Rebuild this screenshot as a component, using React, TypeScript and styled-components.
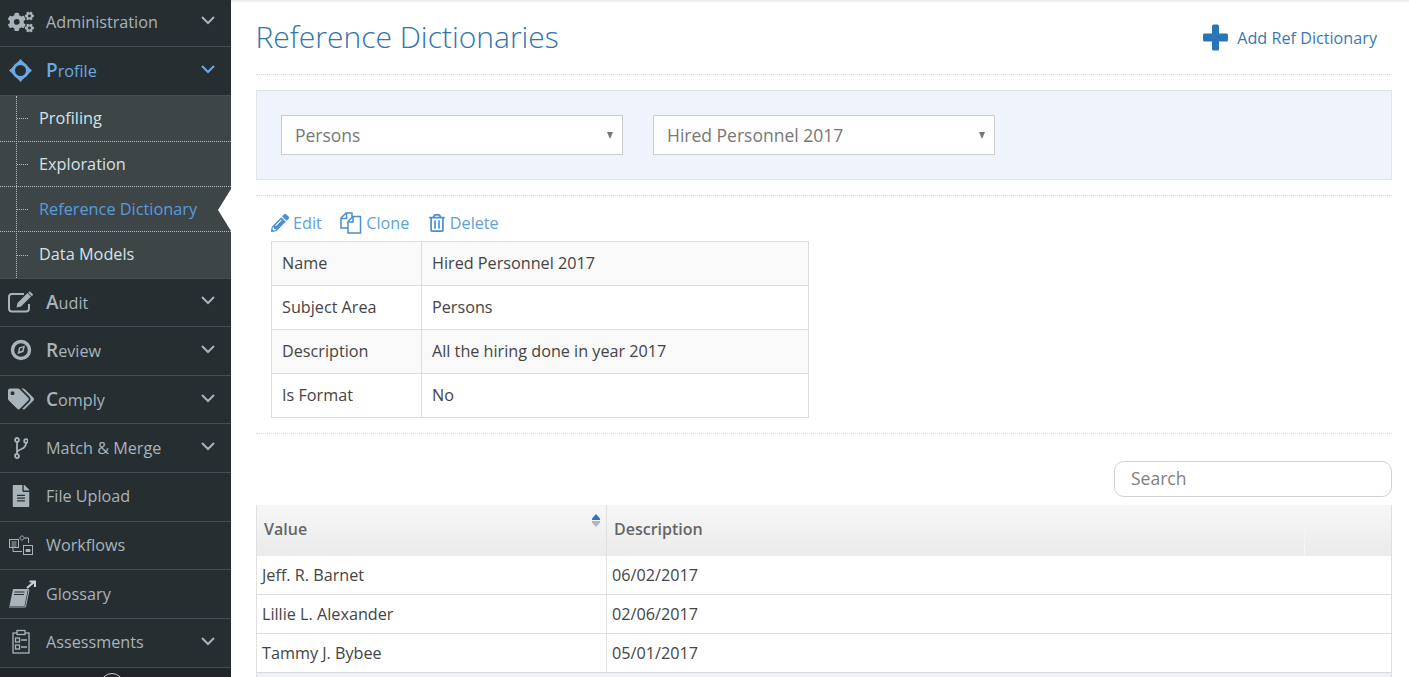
import React from 'react';
import styled, { createGlobalStyle } from 'styled-components';
import { FaCogs, FaPencilAlt, FaTags, FaFileAlt, FaRegTrashAlt } from 'react-icons/fa';

const GlobalStyle = createGlobalStyle`
  html, body {
    margin: 0;
    padding: 0;
    height: 100%;
    overflow: hidden;
    background: #fff;
    font-family: 'Open Sans', sans-serif;
  }
  * { box-sizing: border-box; }
`;

const Page = styled.div`
  display: grid;
  grid-template-columns: 231px 1fr;
  height: 677px;
  overflow: hidden;
`;

const Sidebar = styled.nav`
  background: #1f2528;
  height: 677px;
  overflow: hidden;
  position: relative;
`;

const MenuList = styled.div`
  margin-top: -1.75px;
`;

const MenuRow = styled.div<{ $active?: boolean }>`
  display: flex;
  align-items: center;
  height: 48.65px;
  padding: 0 15px 1px 0;
  background: #272e32;
  border-bottom: 1px solid #454e52;
  color: ${(p) => (p.$active ? '#6aa9e4' : '#a8b3ba')};
  font-size: 16.2px;
`;

const MenuIcon = styled.span`
  display: flex;
  align-items: center;
  justify-content: center;
  width: 41px;
  margin-right: 5px;
  flex-shrink: 0;
  font-size: 26px;
  color: inherit;
`;

const MenuLabel = styled.span<{ $cap?: boolean }>`
  display: inline-block;
  flex: 1;
  ${(p) =>
    p.$cap
      ? `&::first-letter { font-size: 19px; font-weight: 600; }`
      : ''}
`;

const Chevron = styled.svg`
  width: 16px;
  height: 10px;
  flex-shrink: 0;
  fill: none;
  stroke: currentColor;
  stroke-width: 2;
  margin-top: -3px;
`;

const SubList = styled.div`
  background: #3d4547;
  position: relative;
  height: 183px;
  display: grid;
  grid-template-rows: 46px 45px 45px 46px;
  border-bottom: 1px solid #454e52;
  &::before {
    content: '';
    position: absolute;
    left: 16px;
    top: 0;
    bottom: 0;
    border-left: 1px dotted #b9c0c3;
  }
`;

const SubRow = styled.div<{ $active?: boolean; $last?: boolean }>`
  position: relative;
  display: flex;
  align-items: center;
  padding: 0 0 ${(p) => (p.$last ? '2px' : '0')} 39px;
  font-size: 16.3px;
  font-weight: 500;
  color: ${(p) => (p.$active ? '#5b9bdc' : '#d7e1e8')};
  border-bottom: ${(p) => (p.$last ? 'none' : '1px dotted #b9c0c3')};
  &::before {
    content: '';
    position: absolute;
    left: 17px;
    top: 50%;
    width: 11px;
    border-top: 1px dotted #b9c0c3;
  }
  ${(p) =>
    p.$active
      ? `&::after {
          content: '';
          position: absolute;
          right: 0;
          top: 2px;
          border-style: solid;
          border-width: 21px 13px 21px 0;
          border-color: transparent #fff transparent transparent;
        }`
      : ''}
`;

const ScrollKnob = styled.div`
  position: absolute;
  left: 100px;
  top: 673px;
  width: 24px;
  height: 24px;
  border: 1px solid #c8cfd2;
  border-radius: 50%;
`;

const Main = styled.main`
  min-width: 0;
  height: 677px;
  overflow: hidden;
  border-top: 2px solid #eeeeee;
  padding: 0 17px 0 25px;
`;

const Header = styled.header`
  display: flex;
  align-items: center;
  justify-content: space-between;
  height: 73px;
  border-bottom: 1px dotted #d8d8d8;
  padding: 0 15px 3px 0;
`;

const Title = styled.h1`
  margin: 0 0 0 -0.5px;
  font-size: 30px;
  font-weight: 300;
  color: #2f74ab;
`;

const AddLink = styled.a`
  display: flex;
  align-items: center;
  gap: 8px;
  padding-top: 2px;
  font-size: 16.2px;
  color: #3b78b0;
  svg {
    width: 27px;
    height: 27px;
    fill: #2b75b7;
  }
`;

const FilterPanel = styled.section`
  display: flex;
  gap: 30px;
  margin-top: 15px;
  height: 90px;
  padding: 24px;
  background: #eff4fc;
  border: 1px solid #e2e4e6;
`;

const SelectBox = styled.div`
  position: relative;
  display: flex;
  align-items: center;
  width: 342px;
  height: 40px;
  padding: 0 0 1px 13px;
  background: #fff;
  border: 1px solid #cccccc;
  font-size: 17.5px;
  color: #777;
  &::after {
    content: '';
    position: absolute;
    right: 9px;
    top: 16px;
    border-style: solid;
    border-width: 7px 3.5px 0;
    border-color: #777 transparent transparent;
  }
`;

const Divider = styled.div`
  margin-top: 15px;
  border-top: 1px dotted #d8d8d8;
`;

const DetailBlock = styled.section`
  margin-top: 15px;
  padding: 0 0 15px 15px;
  border-bottom: 1px dotted #d8d8d8;
`;

const Actions = styled.div`
  display: flex;
  align-items: center;
  gap: 18.5px;
  height: 30px;
  padding-bottom: 6px;
`;

const ActionLink = styled.a`
  display: flex;
  align-items: center;
  gap: 4px;
  font-size: 16.2px;
  color: #5f9fdc;
  svg {
    color: #4a8fd1;
  }
`;

const InfoTable = styled.table`
  width: 538px;
  border-collapse: collapse;
  font-size: 16.2px;
  color: #444;
`;

const InfoRow = styled.tr<{ $odd: boolean }>`
  height: 44px;
  background: ${(p) => (p.$odd ? '#f9f9f9' : '#fff')};
`;

const InfoCell = styled.td<{ $label?: boolean }>`
  border: 1px solid #dddddd;
  padding: 0 10px 2px;
  width: ${(p) => (p.$label ? '150px' : 'auto')};
`;

const SearchRow = styled.div`
  display: flex;
  justify-content: flex-end;
  margin-top: 27px;
`;

const SearchInput = styled.input`
  width: 278px;
  height: 36px;
  padding: 0 16px 3px;
  border: 1px solid #d2d2d2;
  border-radius: 10px;
  font-family: 'Open Sans', sans-serif;
  font-size: 17.5px;
  outline: none;
  &::placeholder {
    color: #7f7f7f;
    opacity: 1;
  }
`;

const ValuesGrid = styled.div`
  margin-top: 8px;
  border-left: 1px solid #e0e0e0;
  border-right: 1px solid #e0e0e0;
`;

const GridHead = styled.div`
  display: grid;
  grid-template-columns: 350px 1fr 86px;
  height: 51px;
  background: linear-gradient(#f7f7f7, #ebebeb);
  color: #666;
  font-size: 16px;
  font-weight: 600;
`;

const HeadCell = styled.div<{ $faint?: boolean }>`
  position: relative;
  display: flex;
  align-items: center;
  padding: 0 0 3px 7px;
  border-right: 1px solid ${(p) => (p.$faint ? '#f4f4f4' : '#e0e0e0')};
  &:last-child {
    border-right: none;
  }
`;

const SortIcon = styled.svg`
  position: absolute;
  right: 5px;
  top: 9px;
  width: 10px;
  height: 13px;
`;

const GridRow = styled.div`
  display: grid;
  grid-template-columns: 350px 1fr;
  height: 39px;
  background: #fff;
  border-bottom: 1px solid #e0e0e0;
  color: #444;
  font-size: 16.2px;
`;

const GridCell = styled.div<{ $first?: boolean }>`
  display: flex;
  align-items: center;
  padding-left: 5px;
  border-right: ${(p) => (p.$first ? '1px solid #e2e2e2' : 'none')};
`;

const GridFooter = styled.div`
  height: 12px;
  background: #eef1f6;
  border-top: 1px solid #d9d9d9;
  margin-top: -1px;
`;

const ProfileIcon = () => (
  <svg width="25" height="25" viewBox="0 0 25 25" fill="currentColor">
    <circle cx="12.500" cy="12.500" r="7" fill="none" stroke="currentColor" strokeWidth="3" />
    <path d="M12.500 1l4.500 5h-9zM12.500 24l-4.500-5h9zM1 12.500l5-4.500v9zM24 12.500l-5 4.500V8z" />
  </svg>
);

const EditIcon = () => (
  <svg width="25" height="22" viewBox="0 0 25 22">
    <path d="M21 13v4.500a3 3 0 0 1-3 3H4a3 3 0 0 1-3-3V6a3 3 0 0 1 3-3h12" fill="none" stroke="currentColor" strokeWidth="2" />
    <path d="M19.500 2l3.500 3.500L13 15.500l-4.500 1 1-4.500z" fill="currentColor" />
    <path d="M21 1l3.500 3.500" stroke="currentColor" strokeWidth="2" />
  </svg>
);

const CompassIcon = () => (
  <svg width="22" height="22" viewBox="0 0 22 22" fill="none" stroke="currentColor">
    <circle cx="11" cy="11" r="8.500" strokeWidth="3.400" />
    <path d="M7.500 15l1.500-6.500 6-2-1.500 6.500z" fill="currentColor" stroke="none" />
    <path d="M9.500 12.500l.7-3 2.800-1-.7 3z" fill="#272e32" stroke="none" />
  </svg>
);

const BranchIcon = () => (
  <svg width="14" height="22" viewBox="0 0 14 22" fill="none" stroke="currentColor" strokeWidth="1.800">
    <circle cx="3" cy="3" r="2" />
    <circle cx="12" cy="4" r="1.800" />
    <circle cx="3" cy="19" r="2" />
    <path d="M3 5v12M12 6c0 4-2 5-4.500 6S3 14 3 16" />
  </svg>
);

const WorkflowIcon = () => (
  <svg width="26" height="24" viewBox="0 0 26 24" fill="none" stroke="currentColor" strokeWidth="1">
    <rect x="1.500" y="6.500" width="9" height="8" />
    <path d="M3.500 9h5M3.500 11h5M3.500 13h5" />
    <path d="M14 2.500l2.500 2.500L14 7.500 11.500 5z" />
    <path d="M16.500 5h4v5M5 15v3.500h9" />
    <rect x="15.500" y="12.500" width="9" height="9" />
    <path d="M18 16.500h4v2h-4z" fill="currentColor" />
  </svg>
);

const GlossaryIcon = () => (
  <svg width="30" height="30" viewBox="0 0 30 30">
    <path d="M7 10h15l-3.500 17H3.500z" fill="currentColor" />
    <path d="M8.500 13h10M8 15.500h10" stroke="#272e32" strokeWidth="1" />
    <path d="M22 10l1 1-3.500 17H3" fill="none" stroke="currentColor" strokeWidth="1" />
    <path d="M21 9l7-6M23.500 2.500H29V8" fill="none" stroke="#c9d2d8" strokeWidth="2.200" />
  </svg>
);

const AssessmentIcon = () => (
  <svg width="20" height="26" viewBox="0 0 20 26" fill="none" stroke="currentColor" strokeWidth="1.300">
    <rect x="2" y="4" width="16" height="20" />
    <rect x="6" y="1.500" width="8" height="4" fill="#272e32" />
    <rect x="4.500" y="9" width="4" height="4" />
    <rect x="4.500" y="16" width="4" height="4" />
    <path d="M10 11h6M10 18h6" />
  </svg>
);

const CloneIcon = () => (
  <svg width="22" height="22" viewBox="0 0 22 22" fill="none" stroke="currentColor" strokeWidth="1.500">
    <path d="M8 16H1V6l5-5h6v4.500" />
    <path d="M6.500 1v5.500H1" />
    <path d="M8 9.500L13 4.500h7.500V21H8z" />
    <path d="M13 4.500V10H8" />
  </svg>
);

const PlusIcon = () => (
  <svg viewBox="0 0 27 27">
    <path d="M10 2a1.500 1.500 0 0 1 1.500-1.500h4A1.500 1.500 0 0 1 17 2v7.500h7.500A1.500 1.500 0 0 1 26 11v5a1.500 1.500 0 0 1-1.500 1.500H17V25a1.500 1.500 0 0 1-1.500 1.500h-4A1.500 1.500 0 0 1 10 25v-7.500H2.500A1.500 1.500 0 0 1 1 16v-5a1.500 1.500 0 0 1 1.500-1.500H10z" />
  </svg>
);

const ChevronDown = () => (
  <Chevron viewBox="0 0 16 10">
    <polyline points="2,2 8,8 14,2" />
  </Chevron>
);

const infoRows = [
  ['Name', 'Hired Personnel 2017'],
  ['Subject Area', 'Persons'],
  ['Description', 'All the hiring done in year 2017'],
  ['Is Format', 'No'],
];

const valueRows = [
  ['Jeff. R. Barnet', '06/02/2017'],
  ['Lillie L. Alexander', '02/06/2017'],
  ['Tammy J. Bybee', '05/01/2017'],
];

export default function App() {
  return (
    <>
      <GlobalStyle />
      <Page>
        <Sidebar>
          <MenuList>
            <MenuRow>
              <MenuIcon><FaCogs /></MenuIcon>
              <MenuLabel>Administration</MenuLabel>
              <ChevronDown />
            </MenuRow>
            <MenuRow $active>
              <MenuIcon><ProfileIcon /></MenuIcon>
              <MenuLabel $cap>Profile</MenuLabel>
              <ChevronDown />
            </MenuRow>
            <SubList>
              <SubRow>Profiling</SubRow>
              <SubRow>Exploration</SubRow>
              <SubRow $active>Reference Dictionary</SubRow>
              <SubRow $last>Data Models</SubRow>
            </SubList>
            <MenuRow>
              <MenuIcon><EditIcon /></MenuIcon>
              <MenuLabel $cap>Audit</MenuLabel>
              <ChevronDown />
            </MenuRow>
            <MenuRow>
              <MenuIcon><CompassIcon /></MenuIcon>
              <MenuLabel $cap>Review</MenuLabel>
              <ChevronDown />
            </MenuRow>
            <MenuRow>
              <MenuIcon><FaTags /></MenuIcon>
              <MenuLabel $cap>Comply</MenuLabel>
              <ChevronDown />
            </MenuRow>
            <MenuRow>
              <MenuIcon><BranchIcon /></MenuIcon>
              <MenuLabel>Match &amp; Merge</MenuLabel>
              <ChevronDown />
            </MenuRow>
            <MenuRow>
              <MenuIcon><FaFileAlt style={{ fontSize: 22 }} /></MenuIcon>
              <MenuLabel>File Upload</MenuLabel>
            </MenuRow>
            <MenuRow>
              <MenuIcon><WorkflowIcon /></MenuIcon>
              <MenuLabel>Workflows</MenuLabel>
            </MenuRow>
            <MenuRow>
              <MenuIcon><GlossaryIcon /></MenuIcon>
              <MenuLabel>Glossary</MenuLabel>
            </MenuRow>
            <MenuRow>
              <MenuIcon><AssessmentIcon /></MenuIcon>
              <MenuLabel>Assessments</MenuLabel>
              <ChevronDown />
            </MenuRow>
          </MenuList>
          <ScrollKnob />
        </Sidebar>
        <Main>
          <Header>
            <Title>Reference Dictionaries</Title>
            <AddLink><PlusIcon />Add Ref Dictionary</AddLink>
          </Header>
          <FilterPanel>
            <SelectBox>Persons</SelectBox>
            <SelectBox>Hired Personnel 2017</SelectBox>
          </FilterPanel>
          <Divider />
          <DetailBlock>
            <Actions>
              <ActionLink><FaPencilAlt size={18} />Edit</ActionLink>
              <ActionLink><CloneIcon />Clone</ActionLink>
              <ActionLink><FaRegTrashAlt size={18} />Delete</ActionLink>
            </Actions>
            <InfoTable>
              <tbody>
                {infoRows.map(([label, value], i) => (
                  <InfoRow key={label} $odd={i % 2 === 0}>
                    <InfoCell $label>{label}</InfoCell>
                    <InfoCell>{value}</InfoCell>
                  </InfoRow>
                ))}
              </tbody>
            </InfoTable>
          </DetailBlock>
          <SearchRow>
            <SearchInput placeholder="Search" />
          </SearchRow>
          <ValuesGrid>
            <GridHead>
              <HeadCell>
                Value
                <SortIcon viewBox="0 0 10 13">
                  <path d="M5 0l4 4.500v1.500H1V4.500z" fill="#2f74c0" />
                  <path d="M1 7h8v1.500L5 13 1 8.500z" fill="#b5b5b5" />
                </SortIcon>
              </HeadCell>
              <HeadCell $faint>Description</HeadCell>
              <HeadCell />
            </GridHead>
            {valueRows.map(([value, date]) => (
              <GridRow key={value}>
                <GridCell $first>{value}</GridCell>
                <GridCell>{date}</GridCell>
              </GridRow>
            ))}
            <GridFooter />
          </ValuesGrid>
        </Main>
      </Page>
    </>
  );
}
